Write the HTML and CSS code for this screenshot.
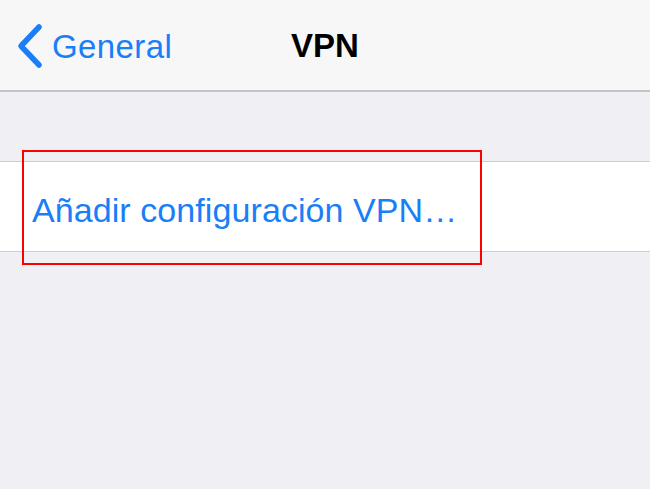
FILE: index.html
```html
<!DOCTYPE html>
<html lang="es">
<head>
<meta charset="utf-8">
<title>VPN</title>
<link rel="stylesheet" href="styles.css">
</head>
<body>
<header class="navbar">
  <a class="back" href="#">
    <svg class="chevron" width="28" height="46" viewBox="0 0 28 46" aria-hidden="true">
      <path d="M23 4 L5 23 L23 42" fill="none" stroke="#1a7ef7" stroke-width="5.5" stroke-linecap="round" stroke-linejoin="round"/>
    </svg>
    <span class="back-label">General</span>
  </a>
  <h1 class="title">VPN</h1>
  <span class="spacer"></span>
</header>
<main class="content">
  <section class="group">
    <div class="cell">
      <span class="cell-action">Añadir configuración VPN…</span>
      <span class="highlight"></span>
    </div>
  </section>
</main>
</body>
</html>
```
FILE: styles.css
```css
* { box-sizing: border-box; }
html, body {
  margin: 0;
  padding: 0;
  width: 650px;
  height: 489px;
  overflow: hidden;
}
body {
  background: #efeff4;
  font-family: "Liberation Sans", Arial, sans-serif;
}
.navbar {
  height: 92px;
  background: #f7f7f8;
  border-bottom: 2px solid #c4c4c8;
  display: grid;
  grid-template-columns: 1fr auto 1fr;
  align-items: center;
}
.back {
  display: flex;
  align-items: center;
  gap: 8px;
  padding-left: 16px;
  text-decoration: none;
  color: #1a7ef7;
  padding-top: 2px;
}
.chevron { display: block; flex: none; }
.back-label {
  font-size: 33px;
  line-height: 1;
  letter-spacing: 0.4px;
}
.title {
  margin: 0;
  font-size: 33px;
  font-weight: bold;
  color: #000;
  line-height: 1;
}
.content {
  padding-top: 69px;
}
.group {
  background: #fff;
  border-top: 1px solid #cfcfd3;
  border-bottom: 1px solid #cfcfd3;
}
.cell {
  position: relative;
  height: 89px;
  display: flex;
  align-items: center;
  padding-left: 32px;
}
.cell-action {
  color: #1a7ef7;
  font-size: 34px;
  line-height: 1;
  padding-top: 6px;
  letter-spacing: 0.08px;
}
.highlight {
  position: absolute;
  left: 22px;
  top: -12px;
  width: 460px;
  height: 115px;
  border: 2px solid #ff0000;
  pointer-events: none;
}
```
